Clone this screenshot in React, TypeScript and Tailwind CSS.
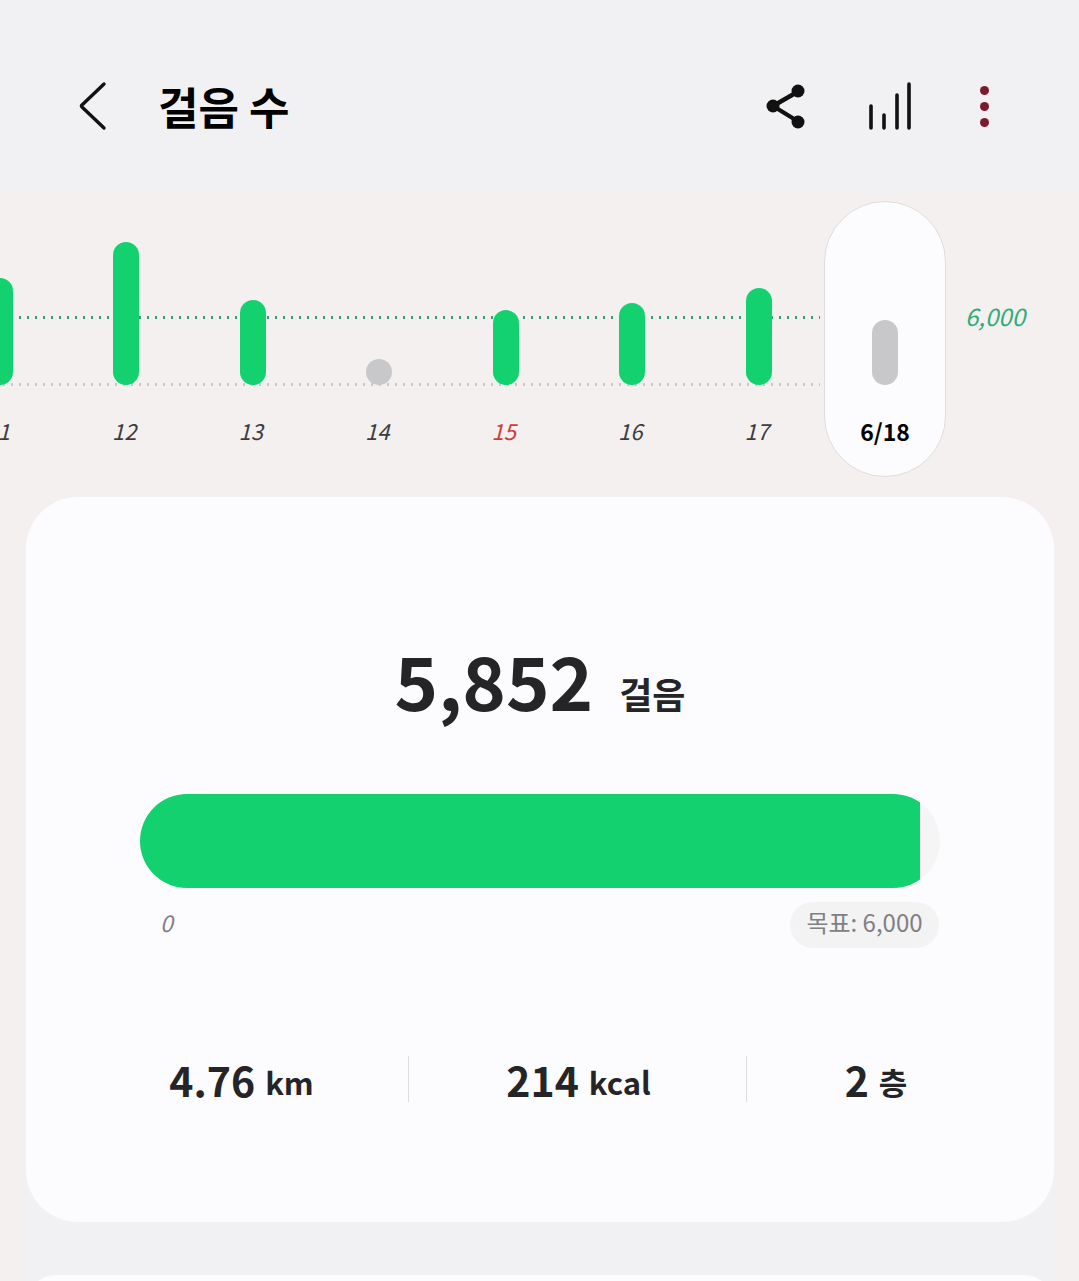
const font = { fontFamily: '"Noto Sans CJK KR", "Noto Sans", sans-serif' };

const days = [
  { label: "11", h: 107, color: "bg-[#13d16f]", text: "text-[#3c3c40]" },
  { label: "12", h: 143, color: "bg-[#13d16f]", text: "text-[#3c3c40]" },
  { label: "13", h: 85, color: "bg-[#13d16f]", text: "text-[#3c3c40]" },
  { label: "14", h: 26, color: "bg-[#c8c8ca]", text: "text-[#3c3c40]" },
  { label: "15", h: 75, color: "bg-[#13d16f]", text: "text-[#d03b3b]" },
  { label: "16", h: 82, color: "bg-[#13d16f]", text: "text-[#3c3c40]" },
  { label: "17", h: 97, color: "bg-[#13d16f]", text: "text-[#3c3c40]" },
];

function Stat({ value, unit, width, divider }: { value: string; unit: string; width: string; divider?: boolean }) {
  return (
    <div className={`flex h-[46px] shrink-0 items-center justify-center ${width} ${divider ? "border-r border-[#dcdcde]" : ""}`}>
      <span className="text-[41px] font-bold leading-none text-[#252528]">{value}</span>
      <span className="ml-[10px] mt-1 text-[31px] font-bold leading-none text-[#252528]">{unit}</span>
    </div>
  );
}

export default function App() {
  return (
    <div className="h-[1281px] w-[1079px] overflow-hidden bg-[#f5f0f0]" style={font}>
      <header className="flex h-[193px] items-center bg-[#f1f1f3] pt-[19px]">
        <svg className="ml-[78px] h-[50px] w-[30px]" viewBox="0 0 30 50" fill="none">
          <path d="M26 3 L4 24 Q3 25 4 26 L26 47" stroke="#111" strokeWidth="3.4" strokeLinecap="round" strokeLinejoin="round" />
        </svg>
        <h1 className="ml-[50px] text-[44px] font-bold leading-none text-black">걸음 수</h1>
        <svg className="ml-auto h-[46px] w-[42px]" viewBox="0 0 42 46" fill="none">
          <path d="M34 8 L8 23 L34 39" stroke="#111" strokeWidth="4.4" strokeLinejoin="round" />
          <circle cx="33" cy="8" r="6.5" fill="#111" />
          <circle cx="8" cy="23" r="6.5" fill="#111" />
          <circle cx="33" cy="39" r="6.5" fill="#111" />
        </svg>
        <svg className="ml-[60px] h-[48px] w-[46px]" viewBox="0 0 46 48" fill="none" stroke="#111" strokeWidth="3.6" strokeLinecap="round">
          <path d="M4 24V46M17 33V46M30 13V46M42 2V46" />
        </svg>
        <div className="ml-[67px] mr-[90px] flex h-[41px] w-[9px] flex-col justify-between">
          <span className="h-[9px] w-[9px] rounded-full bg-[#7e1a2e]" />
          <span className="h-[9px] w-[9px] rounded-full bg-[#7e1a2e]" />
          <span className="h-[9px] w-[9px] rounded-full bg-[#7e1a2e]" />
        </div>
      </header>

      <section className="relative h-[304px]">
        <div className="absolute left-0 top-[123px] h-[3px] w-[820px] bg-[radial-gradient(circle,#2f9e73_1.1px,transparent_1.5px)] bg-[length:8px_3px]" />
        <div className="absolute left-0 top-[190px] h-[3px] w-[820px] bg-[radial-gradient(circle,#c9c9c9_1.1px,transparent_1.5px)] bg-[length:8px_3px]" />
        <div className="relative ml-[-63.5px] flex h-full items-start">
          {days.map((d) => (
            <div key={d.label} className="flex w-[126.5px] shrink-0 flex-col items-center">
              <div className="flex h-[192px] items-end">
                <div className={`w-[26px] rounded-full ${d.color}`} style={{ height: d.h }} />
              </div>
              <span className={`mt-[34px] pr-1 text-[22px] italic leading-none ${d.text}`}>{d.label}</span>
            </div>
          ))}
          <div className="ml-[2px] mt-[8px] flex h-[276px] w-[122px] shrink-0 flex-col items-center rounded-full border border-[#e0dcdc] bg-[#fcfcfe]">
            <div className="flex h-[183px] items-end">
              <div className="h-[65px] w-[26px] rounded-full bg-[#c8c8ca]" />
            </div>
            <span className="mt-[35px] text-[23px] font-bold leading-none text-black">6/18</span>
          </div>
          <span className="ml-[19px] mt-[111px] text-[24px] italic leading-none text-[#2cae78]">6,000</span>
        </div>
      </section>

      <main>
        <div className="relative z-10 ml-[26px] h-[725px] w-[1028px] rounded-[52px] bg-[#fcfcfe] px-[114px] pt-[140px]">
          <div className="flex h-[84px] items-end justify-center">
            <span className="text-[74px] font-bold leading-[84px] text-[#252528]">5,852</span>
            <span className="ml-[26px] text-[36px] font-bold leading-[56px] text-[#252528]">걸음</span>
          </div>
          <div className="mt-[73px] h-[94px] w-[800px] overflow-hidden rounded-full bg-[#f5f5f6]">
            <div className="h-full w-[780px] bg-[#13d16f]" />
          </div>
          <div className="mt-[14px] flex h-[46px] w-[799px] items-center justify-between">
            <span className="mb-[6px] ml-5 text-[23px] italic leading-none text-[#828284]">0</span>
            <span className="flex h-[46px] w-[149px] items-center justify-center rounded-full bg-[#f3f3f4] pb-[6px] text-[24px] leading-none text-[#808082]">목표: 6,000</span>
          </div>
          <div className="ml-[-69px] mt-[108px] flex">
            <Stat value="4.76" unit="km" width="w-[338px] pl-[4px]" divider />
            <Stat value="214" unit="kcal" width="w-[338px] pl-[2px]" divider />
            <Stat value="2" unit="층" width="w-[264px] pr-[6px]" />
          </div>
        </div>
        <div className="ml-[25px] mt-[-60px] h-[200px] w-[1029px] bg-[#f1f1f3] pl-px pt-[113px]">
          <div className="h-[60px] w-[1028px] rounded-[52px] bg-[#fcfcfe]" />
        </div>
      </main>
    </div>
  );
}
